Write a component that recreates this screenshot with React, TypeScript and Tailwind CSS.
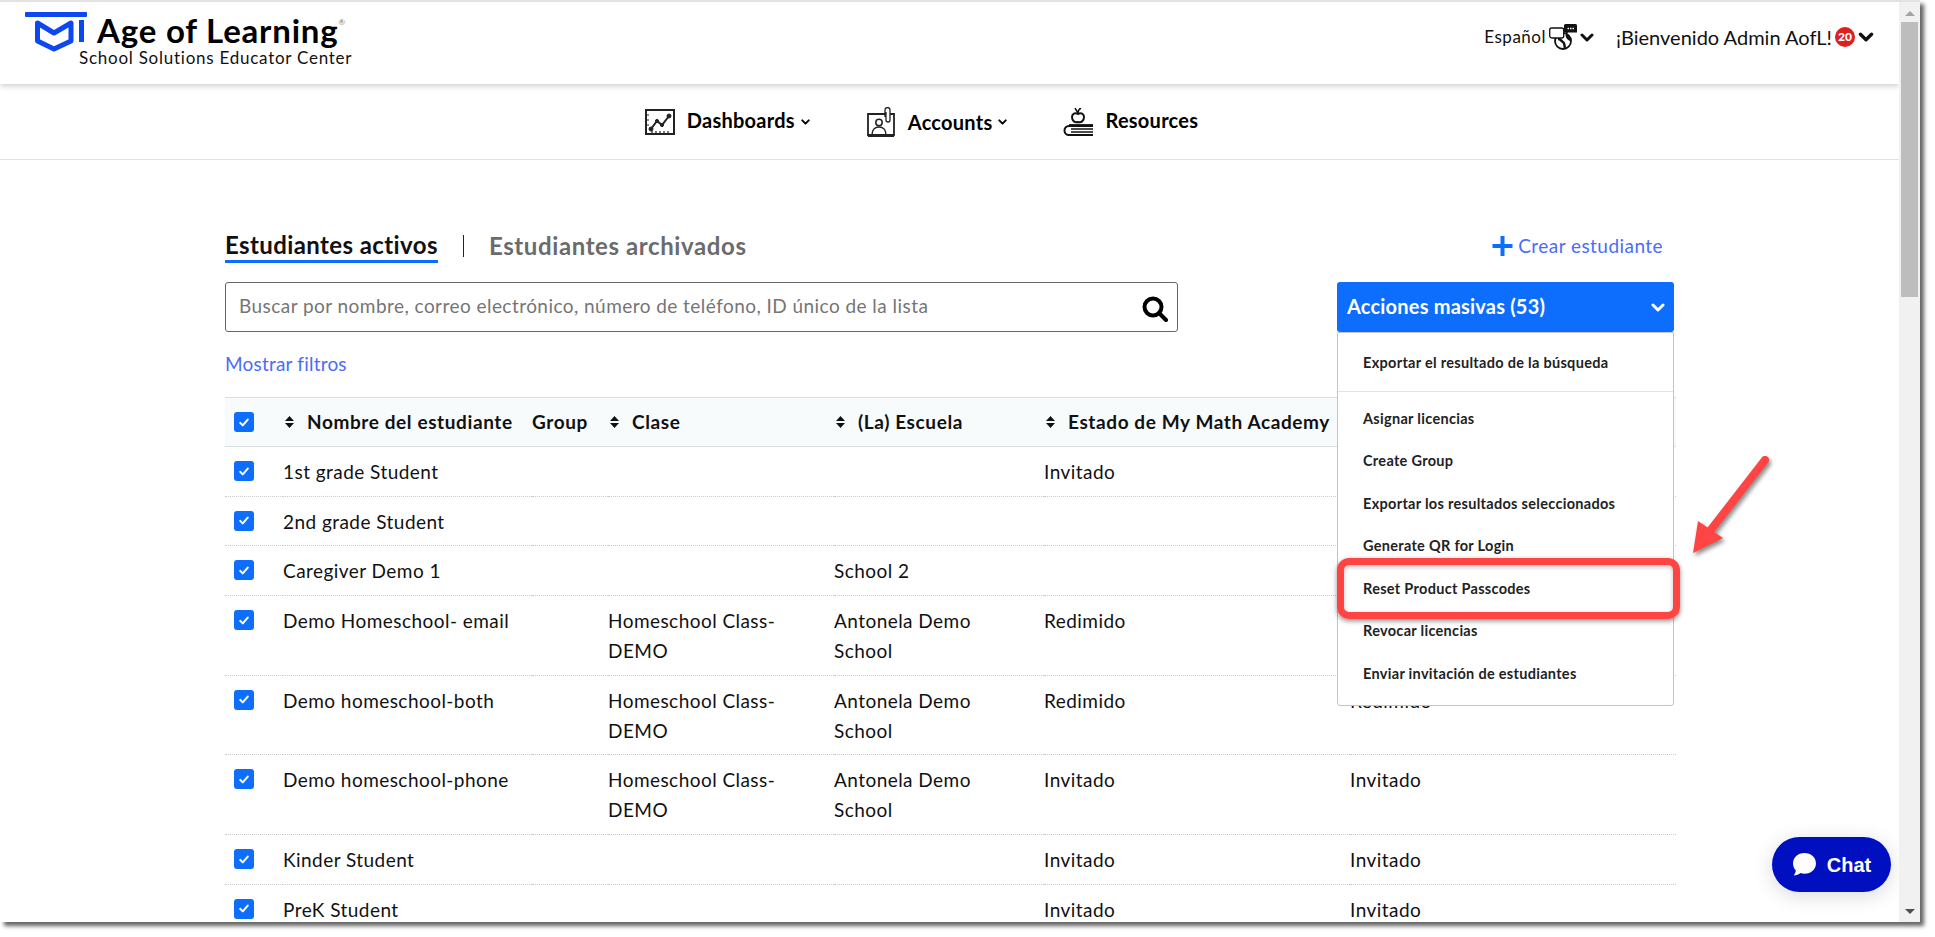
const font = "[font-family:Lato,'Liberation_Sans',sans-serif]";

type Row = {
  name: string;
  clase?: string;
  escuela?: string;
  estado?: string;
  ultimo?: string;
};

const rows: Row[] = [
  { name: "1st grade Student", estado: "Invitado" },
  { name: "2nd grade Student" },
  { name: "Caregiver Demo 1", escuela: "School 2" },
  { name: "Demo Homeschool- email", clase: "Homeschool Class-DEMO", escuela: "Antonela Demo School", estado: "Redimido" },
  { name: "Demo homeschool-both", clase: "Homeschool Class-DEMO", escuela: "Antonela Demo School", estado: "Redimido", ultimo: "Redimido" },
  { name: "Demo homeschool-phone", clase: "Homeschool Class-DEMO", escuela: "Antonela Demo School", estado: "Invitado", ultimo: "Invitado" },
  { name: "Kinder Student", estado: "Invitado", ultimo: "Invitado" },
  { name: "PreK Student", estado: "Invitado", ultimo: "Invitado" },
];

const menuItems = [
  "Asignar licencias",
  "Create Group",
  "Exportar los resultados seleccionados",
  "Generate QR for Login",
  "Reset Product Passcodes",
  "Revocar licencias",
  "Enviar invitación de estudiantes",
];

const Chevron = ({ className = "" }: { className?: string }) => (
  <svg viewBox="0 0 14 9" className={className} fill="none" stroke="currentColor" strokeWidth="3" strokeLinecap="round" strokeLinejoin="round">
    <path d="M2 2l5 5 5-5" />
  </svg>
);

const Sort = () => (
  <svg viewBox="0 0 9 12" className="h-[12px] w-[9px] shrink-0" fill="#111">
    <path d="M4.5 0L9 5H0zM4.5 12L0 7h9z" />
  </svg>
);

const Check = () => (
  <span className="flex h-[20px] w-[20px] items-center justify-center rounded-[3px] bg-[#0d6efd]">
    <svg viewBox="0 0 12 10" className="h-[9px] w-[10px]" fill="none" stroke="#fff" strokeWidth="2.4" strokeLinecap="round" strokeLinejoin="round">
      <path d="M1.5 5.5l3 3 6-7" />
    </svg>
  </span>
);

const Logo = () => (
  <svg viewBox="0 0 62 41" className="h-[41px] w-[62px] shrink-0">
    <rect x="0" y="0" width="62" height="5" rx="1" fill="#0d47f0" />
    <path d="M12.5 11L29 21 46 11V29L29 37 12.5 29Z" fill="none" stroke="#0d47f0" strokeWidth="5" strokeLinejoin="round" />
    <rect x="54" y="8" width="5" height="22" fill="#0d47f0" />
  </svg>
);

const DashIcon = () => (
  <svg viewBox="0 0 30 26" className="h-[26px] w-[30px]" fill="none" stroke="#222">
    <rect x="1" y="1" width="28" height="24" strokeWidth="2" />
    <path d="M6 20l6-8 5 4 7-9" strokeWidth="2" />
    <circle cx="6" cy="20" r="2" fill="#222" />
    <circle cx="12" cy="12" r="1.6" fill="#222" />
    <circle cx="17" cy="16" r="1.6" fill="#222" />
    <circle cx="24" cy="7" r="2" fill="#222" />
    <path d="M2 6h2M2 11h2M2 16h2M7 24v-2M11 24v-2M15 24v-2M19 24v-2M23 24v-2" strokeWidth="1.2" />
  </svg>
);

const AccountIcon = () => (
  <svg viewBox="0 0 28 30" className="h-[30px] w-[28px]" fill="none" stroke="#222">
    <path d="M1 7h26v21H1z" strokeWidth="1.8" />
    <path d="M1 29h26" strokeWidth="2.4" />
    <path d="M18 10V3a2.5 2.5 0 015 0v10a2 2 0 01-4 0V5" strokeWidth="1.3" fill="#fff" />
    <circle cx="12" cy="15.5" r="3.2" strokeWidth="1.5" />
    <path d="M5 28c0-5 3-8 7-8s7 3 7 8" strokeWidth="1.5" />
  </svg>
);

const ResourceIcon = () => (
  <svg viewBox="0 0 30 28" className="h-[28px] w-[30px]" fill="none" stroke="#111">
    <path d="M15 5L12 0M15 5c0-2 1-4 3-5" strokeWidth="1.5" />
    <path d="M15 6c3-2 6 0 6 3 0 4-3 6-6 5-3 1-6-1-6-5 0-3 3-5 6-3z" strokeWidth="2" />
    <path d="M6 17h24" strokeWidth="1.8" />
    <path d="M30 18H6a4.5 4.5 0 000 9h24" strokeWidth="2" />
    <path d="M8 21h22M8 24h22" strokeWidth="1.5" />
  </svg>
);

const GlobeIcon = () => (
  <svg viewBox="0 0 28 26" className="h-[26px] w-[28px]" fill="none" stroke="#111">
    <circle cx="14" cy="17" r="8" strokeWidth="1.8" />
    <path d="M9 15c3 0 3 2 5 3s1 3 2 6" strokeWidth="2.5" />
    <path d="M18 11c0 3 2 4 4 5" strokeWidth="3" />
    <rect x="0.7" y="4" width="14" height="10" rx="2" fill="#fff" strokeWidth="1.3" />
    <path d="M15 1.5A1.5 1.5 0 0116.5 0h10A1.5 1.5 0 0128 1.5v7H19l-2 3v-3h-2z" fill="#111" stroke="none" />
    <path d="M18.5 4.5h1.5M21 4.5h1.5M23.5 4.5h1.5" stroke="#fff" strokeWidth="1.5" />
  </svg>
);

function Th({ label, width, sort = true }: { label: string; width: string; sort?: boolean }) {
  return (
    <th className={`h-[49px] p-0 text-left align-middle font-bold ${width}`}>
      <span className={`flex items-center gap-[13px] ${sort ? "pl-[2px]" : ""}`}>
        {sort && <Sort />}
        <span className="whitespace-nowrap">{label}</span>
      </span>
    </th>
  );
}

function Td({ text }: { text?: string }) {
  return <td className="pb-[8.7px] pr-[36px] pt-[10px] align-top">{text}</td>;
}

export default function App() {
  return (
    <div className={`relative h-[937px] w-[1935px] overflow-hidden bg-white text-[#111] ${font}`}>
      <div className="flex h-[922px] w-[1920px] overflow-hidden border-t-2 border-[#e2e2e2] shadow-[4px_4px_4px_#666]">
        <div className="relative h-full min-w-0 flex-1 overflow-hidden">
          <header className="relative z-10 flex h-[82px] items-start justify-between bg-white pl-[25px] shadow-[0_2px_6px_rgba(0,0,0,0.2)]">
            <div className="flex pt-[10px]">
              <Logo />
              <div className="-ml-[8px] flex flex-col">
                <div className="flex items-start pl-[18px] pt-[1px]">
                  <span className="text-[33px] leading-[35px] font-bold tracking-[0.8px] text-black">Age of Learning</span>
                  <span className="text-[8px] leading-[18px] text-[#777]">®</span>
                </div>
                <span className="text-[17px] leading-[20px] tracking-[0.75px]">School Solutions Educator Center</span>
              </div>
            </div>
            <div className="flex items-center pr-[25px] pt-[20px]">
              <span className="text-[17px] tracking-[0.5px]">Español</span>
              <span className="ml-[3px]"><GlobeIcon /></span>
              <Chevron className="ml-[3px] h-[9px] w-[14px]" />
              <span className="ml-[22px] text-[20px]">¡Bienvenido Admin AofL!</span>
              <span className="ml-[3px] flex h-[20px] w-[20px] items-center justify-center rounded-full bg-[#e0201f] text-[12px] font-black text-white">20</span>
              <Chevron className="ml-[3px] h-[10px] w-[16px]" />
            </div>
          </header>

          <nav className="flex h-[76px] items-center justify-center border-b border-[#e2e2e2] bg-white pr-[56px] text-[20px] font-bold tracking-[0.25px] text-black">
            <span className="flex items-center"><DashIcon /><span className="ml-[12px] mb-[3px]">Dashboards</span><Chevron className="ml-[6px] h-[6px] w-[9px]" /></span>
            <span className="ml-[57px] flex items-center"><AccountIcon /><span className="ml-[13px]">Accounts</span><Chevron className="ml-[6px] h-[6px] w-[9px]" /></span>
            <span className="ml-[56px] flex items-center"><ResourceIcon /><span className="ml-[12px] mb-[3px]">Resources</span></span>
          </nav>

          <main className="ml-[225px] w-[1451px] pt-[71px]">
            <div className="flex h-[30px] items-center justify-between">
              <div className="flex items-center text-[24px] font-bold tracking-[0.4px]">
                <span className="border-b-[3px] border-[#0d6efd] leading-[30px]">Estudiantes activos</span>
                <span className="mx-[25px] h-[22px] w-px bg-[#222]" />
                <span className="tracking-[0.6px] text-[#6b6b6b]">Estudiantes archivados</span>
              </div>
              <a className="mr-[13px] flex items-center text-[19px] tracking-[0.45px] text-[#4a6cf7]">
                <svg viewBox="0 0 20 20" className="mr-[5px] h-[20px] w-[21px]" fill="#0d6efd"><path d="M8 0h4v8h8v4h-8v8H8v-8H0V8h8z" /></svg>
                Crear estudiante
              </a>
            </div>

            <div className="mt-[21px] flex items-start justify-between">
              <div className="flex h-[50px] w-[953px] items-center justify-between rounded-[3px] border border-[#666] pl-[13px] pr-[9px]">
                <span className="mb-[2px] text-[19px] tracking-[0.45px] text-[#757575]">Buscar por nombre, correo electrónico, número de teléfono, ID único de la lista</span>
                <svg viewBox="0 0 26 26" className="mt-[4px] h-[26px] w-[26px]" fill="none" stroke="#000" strokeWidth="4"><circle cx="11" cy="11" r="8.5" /><path d="M17 17l7 7" strokeLinecap="round" /></svg>
              </div>
              <div className="relative mr-[2px] w-[337px]">
                <button className="flex h-[50px] w-full items-center justify-between rounded-[3px] bg-[#0d6efd] pl-[10px] pr-[9px] text-[20px] font-bold tracking-[0.2px] text-white">
                  <span className="mb-[2px]">Acciones masivas (53)</span>
                  <Chevron className="h-[9px] w-[14px]" />
                </button>
                <div className="absolute left-0 top-[50px] z-20 h-[374px] w-full rounded-b-[3px] border border-[#c4c4c4] bg-white text-[14.5px] font-bold tracking-[0.3px] text-[#222]">
                  <div className="flex h-[59px] items-center border-b border-[#e3e3e3] pl-[25px] pt-[2px]">Exportar el resultado de la búsqueda</div>
                  <div className="flex flex-col pt-[5.5px]">
                    {menuItems.map((item) => (
                      <div key={item} className="flex h-[42.5px] items-center pl-[25px]">{item}</div>
                    ))}
                  </div>
                </div>
              </div>
            </div>

            <a className="mt-[18px] block text-[19px] leading-[28px] tracking-[0.2px] text-[#4a6cf7]">Mostrar filtros</a>

            <table className="mt-[19px] w-[1451px] table-fixed text-[19px] leading-[30px] tracking-[0.45px]">
              <thead>
                <tr className="border-y border-[#dcdcdc] bg-[#f7fbfc] tracking-[0.6px]">
                  <th className="h-[49px] w-[58px] p-0 pl-[9px] align-middle"><Check /></th>
                  <Th label="Nombre del estudiante" width="w-[249px]" />
                  <Th label="Group" width="w-[76px]" sort={false} />
                  <Th label="Clase" width="w-[226px]" />
                  <Th label="(La) Escuela" width="w-[210px]" />
                  <Th label="Estado de My Math Academy" width="w-[306px]" />
                  <th className="w-[326px] p-0" />
                </tr>
              </thead>
              <tbody>
                {rows.map((r) => (
                  <tr key={r.name} className="border-b border-dotted border-[#c9c9c9]">
                    <td className="px-0 pb-0 pl-[9px] pt-[14px] align-top"><Check /></td>
                    <td className="pb-[8.7px] pt-[10px] align-top whitespace-nowrap">{r.name}</td>
                    <td />
                    <Td text={r.clase} />
                    <Td text={r.escuela} />
                    <Td text={r.estado} />
                    <Td text={r.ultimo} />
                  </tr>
                ))}
              </tbody>
            </table>
          </main>

          <button className="absolute left-[1772px] top-[835px] z-30 flex h-[55px] w-[119px] items-center justify-center gap-[10px] rounded-full bg-[#0010c0] text-[20px] font-bold text-white shadow-[0_4px_20px_rgba(0,0,0,0.15)] [font-family:'Liberation_Sans',sans-serif]">
            <svg viewBox="0 0 24 24" className="h-[25px] w-[25px]" fill="#fff"><path d="M12 1C5.6 1 1 5.4 1 11c0 2.6 1 4.9 2.7 6.7-.2 1.6-1 3.3-2 4.8 2.3-.1 4.8-1 6.5-2.3 1.2.4 2.5.7 3.8.7 6.4 0 11-4.4 11-9.9S18.4 1 12 1z" /></svg>
            Chat
          </button>
        </div>

        <div className="flex h-full w-[21px] shrink-0 flex-col items-center bg-[#f1f1f1]">
          <svg viewBox="0 0 10 5" className="mt-[9px] h-[5px] w-[10px]" fill="#a3a3a3"><path d="M5 0l5 5H0z" /></svg>
          <div className="mt-[6px] h-[275px] w-[17px] bg-[#bdbdbd]" />
          <div className="flex-1" />
          <svg viewBox="0 0 10 5" className="mb-[8px] h-[5px] w-[10px]" fill="#505050"><path d="M5 5L0 0h10z" /></svg>
        </div>
      </div>

      <div className="absolute left-[1337px] top-[558px] z-40 h-[61px] w-[343px] rounded-[12px] border-[7px] border-[#ff4444] shadow-[0_2px_5px_rgba(0,0,0,0.45),inset_0_2px_4px_rgba(0,0,0,0.25)]" />
      <svg viewBox="0 0 90 105" className="absolute left-[1690px] top-[452px] z-40 h-[105px] w-[90px] drop-shadow-[2px_3px_2px_rgba(0,0,0,0.45)]" fill="#ff4444">
        <path d="M75 8L16 84" stroke="#ff4444" strokeWidth="8" strokeLinecap="round" fill="none" />
        <path d="M3 101l5-32 25 17z" />
      </svg>
    </div>
  );
}
